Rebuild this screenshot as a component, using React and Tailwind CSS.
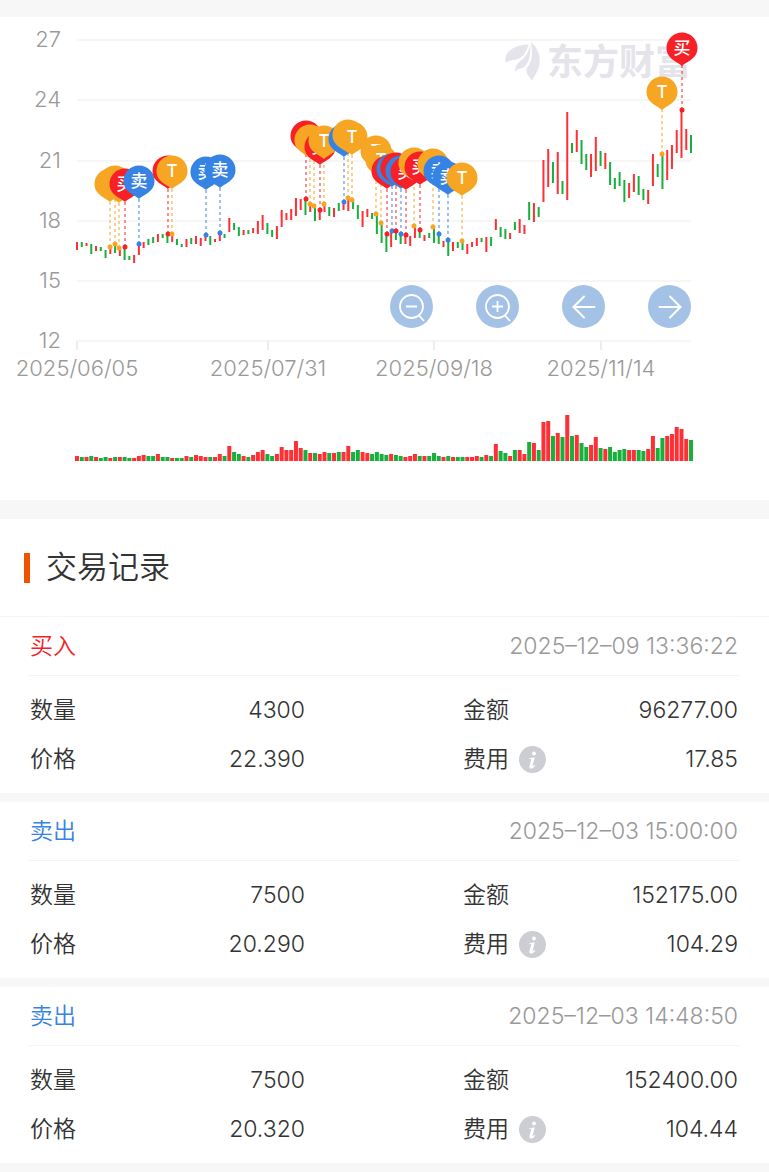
import { ArrowLeft, ArrowRight } from "lucide-react";

const RED = "#ff2f35";
const GREEN = "#16b13c";

const PIN = {
  buy: { color: "#f72027", label: "买" },
  sell: { color: "#3783e3", label: "卖" },
  t: { color: "#f6a623", label: "T" },
};

const GRID = [
  { value: 27, y: 40 },
  { value: 24, y: 100 },
  { value: 21, y: 161 },
  { value: 18, y: 221 },
  { value: 15, y: 281 },
  { value: 12, y: 341 },
];

const DATES = [
  { x: 77, label: "2025/06/05" },
  { x: 268, label: "2025/07/31" },
  { x: 434, label: "2025/09/18" },
  { x: 601, label: "2025/11/14" },
];

// [high y, low y, 1 = up / 0 = down, volume height]
const DAYS = [
  [242, 250, 1, 5], [242, 247, 0, 4], [243, 246, 1, 4], [244, 254, 0, 5], [246, 251, 1, 4],
  [247, 251, 0, 3], [250, 258, 0, 4], [248, 254, 1, 3], [245, 253, 0, 4], [249, 256, 1, 4],
  [247, 260, 0, 4], [256, 260, 0, 3], [255, 263, 1, 3], [245, 255, 1, 5], [242, 248, 1, 6],
  [239, 245, 0, 5], [237, 243, 0, 5], [234, 242, 1, 7], [234, 238, 0, 4], [234, 243, 0, 4],
  [234, 242, 1, 3], [239, 245, 0, 3], [244, 247, 0, 3], [239, 247, 1, 5], [238, 244, 0, 4],
  [236, 244, 1, 6], [238, 246, 1, 5], [236, 241, 1, 4], [236, 245, 0, 4], [239, 242, 1, 4],
  [233, 241, 1, 7], [234, 238, 0, 5], [218, 232, 1, 15], [223, 230, 0, 9], [227, 236, 0, 7],
  [230, 235, 1, 5], [230, 234, 0, 4], [228, 233, 1, 6], [221, 234, 1, 9], [215, 230, 1, 11],
  [223, 234, 0, 7], [230, 237, 0, 5], [226, 239, 1, 7], [210, 227, 1, 14], [213, 220, 1, 11],
  [209, 220, 1, 11], [198, 216, 1, 20], [199, 210, 1, 13], [199, 215, 0, 11], [203, 212, 1, 8],
  [207, 221, 0, 8], [209, 220, 1, 7], [204, 212, 1, 9], [207, 216, 0, 8], [208, 217, 1, 8],
  [203, 211, 0, 9], [202, 210, 1, 9], [200, 211, 1, 15], [200, 209, 0, 9], [205, 219, 0, 11],
  [211, 227, 1, 9], [209, 217, 1, 8], [213, 219, 0, 7], [215, 234, 0, 9], [223, 243, 0, 7],
  [234, 252, 0, 6], [233, 247, 1, 7], [231, 240, 0, 6], [234, 244, 0, 5], [235, 244, 1, 4],
  [236, 246, 1, 5], [226, 238, 1, 7], [230, 238, 0, 5], [235, 241, 1, 5], [233, 238, 0, 5],
  [227, 243, 0, 8], [234, 244, 0, 5], [241, 247, 1, 4], [240, 256, 0, 5], [242, 251, 1, 4],
  [242, 248, 0, 4], [241, 250, 0, 4], [244, 254, 1, 4], [242, 247, 1, 4], [238, 246, 1, 5],
  [238, 242, 0, 4], [237, 252, 1, 6], [237, 246, 0, 5], [219, 230, 1, 17], [227, 237, 0, 10],
  [229, 239, 0, 8], [233, 239, 1, 5], [222, 230, 0, 11], [219, 233, 1, 11], [225, 234, 1, 7],
  [202, 220, 0, 19], [203, 222, 1, 18], [207, 217, 0, 11], [160, 202, 1, 39], [149, 187, 1, 40],
  [162, 183, 0, 25], [152, 194, 1, 28], [181, 194, 0, 24], [112, 200, 1, 46], [143, 153, 0, 25],
  [130, 152, 1, 26], [140, 164, 0, 18], [154, 170, 0, 14], [154, 177, 1, 16], [137, 171, 1, 24],
  [151, 166, 0, 13], [153, 169, 1, 12], [162, 185, 0, 14], [178, 189, 0, 9], [172, 186, 0, 11],
  [180, 202, 0, 12], [183, 198, 1, 11], [174, 192, 1, 11], [176, 195, 0, 11], [189, 200, 0, 10],
  [190, 204, 1, 12], [154, 186, 1, 25], [164, 177, 0, 13], [154, 189, 0, 23], [150, 180, 1, 25],
  [145, 169, 1, 27], [130, 153, 1, 34], [111, 158, 1, 32], [129, 150, 1, 22], [135, 153, 0, 21],
];

// [type, x, pin centre y, dot y, fully behind a later pin]
const TRADES = [
  ["t", 110, 184, 247, true], ["t", 115, 181, 244, true], ["t", 119, 185, 248, true], ["buy", 125, 184, 247],
  ["sell", 139, 181, 244], ["buy", 168, 171, 234, true], ["t", 172, 171, 234], ["sell", 206, 172, 235],
  ["sell", 220, 170, 233], ["buy", 306, 136, 199, true], ["t", 310, 140, 204, true], ["t", 314, 143, 206, true],
  ["buy", 320, 147, 210], ["t", 324, 141, 204], ["sell", 344, 139, 202, true], ["t", 348, 135, 198, true],
  ["t", 352, 137, 200], ["t", 376, 151, 214], ["t", 381, 160, 223], ["buy", 387, 171, 234, true],
  ["sell", 392, 169, 231, true], ["buy", 396, 168, 231, true], ["sell", 401, 171, 234, true], ["buy", 406, 172, 235],
  ["t", 414, 163, 226, true], ["buy", 420, 167, 230], ["t", 433, 164, 227, true], ["sell", 439, 171, 234],
  ["sell", 448, 177, 240], ["t", 462, 178, 241], ["t", 662, 92, 154], ["buy", 682, 48, 110],
];

const RECORDS = [
  { side: "买入", time: "2025–12–09 13:36:22", count: "4300", price: "22.390", amount: "96277.00", fee: "17.85" },
  { side: "卖出", time: "2025–12–03 15:00:00", count: "7500", price: "20.290", amount: "152175.00", fee: "104.29" },
  { side: "卖出", time: "2025–12–03 14:48:50", count: "7500", price: "20.320", amount: "152400.00", fee: "104.44" },
];

const dayX = (i) => 77 + (i * 614) / 129;

const Watermark = () => (
  <g fill="#e4e4ea">
    <path d="M528.500 44.500C521 44.500 512 47 507.500 53C505 56.500 505 60 505.700 63C509 59.500 514 60.500 519 58.500C524 56 527 50 528.500 44.500Z" />
    <path d="M530 44.500C529 51 526 57 521 60.500C517 63 515 67 515 72C518 68 521 69 524.500 66.500C530 62 531 52 530 44.500Z" />
    <path d="M530.800 42C533 53 532 62 528 66.500C525.500 69.500 526 72 528 75C530 77.500 531 79 531.700 81C533 78 537 73 538.500 68C542 57 538 48 530.800 42Z" />
    <text x="547" y="75" fontSize="36" fontWeight="700">东方财富</text>
  </g>
);

const Pin = ({ type, x, y, dot, covered }) => {
  const { color, label } = PIN[type];
  return (
    <g>
      <path
        d={`M${x} ${y + 18}C${x - 4} ${y + 14} ${x - 15.5} ${y + 11} ${x - 15.5} ${y}A15.5 15.5 0 0 1 ${x + 15.5} ${y}C${x + 15.5} ${y + 11} ${x + 4} ${y + 14} ${x} ${y + 18}Z`}
        fill={color}
      />
      <circle cx={x} cy={dot} r="2.500" fill={color} />
      {!covered && (
        <text x={x} y={y + 6} fontSize="17" fontWeight="500" textAnchor="middle" fill="#fff">
          {label}
        </text>
      )}
    </g>
  );
};

const Chart = () => (
  <svg viewBox="0 17 769 483" className="block w-full" role="img" aria-label="K线">
    {GRID.map(({ value, y }) => (
      <g key={value}>
        <path d={`M77 ${y}H691`} stroke="#f6f6f7" strokeWidth="2" />
        <text x="61" y={y + 7} fontSize="22" textAnchor="end" fill="#999">{value}</text>
      </g>
    ))}
    {DATES.map(({ x, label }) => (
      <g key={label}>
        <path d={`M${x} 341V350`} stroke="#ededee" strokeWidth="2" />
        <text x={x} y="376" fontSize="22" textAnchor="middle" fill="#999">{label}</text>
      </g>
    ))}
    <Watermark />
    {DAYS.map(([high, low, up, volume], i) => (
      <g key={i} fill={up ? RED : GREEN}>
        <rect x={dayX(i) - 1} y={high} width="2" height={low - high} />
        <rect x={dayX(i) - 2} y={461 - volume} width="4" height={volume} />
      </g>
    ))}
    {TRADES.map(([type, x, y, dot]) => (
      <path key={x} d={`M${x} ${dot}V${y + 17}`} stroke={PIN[type].color} strokeWidth="1" strokeDasharray="3 3" />
    ))}
    {TRADES.map(([type, x, y, dot, covered]) => (
      <Pin key={x} type={type} x={x} y={y} dot={dot} covered={covered} />
    ))}
  </svg>
);

const ZoomIcon = ({ plus }) => (
  <svg viewBox="0 0 43 43" className="size-full" fill="none" stroke="#fff" strokeWidth="1.800">
    <circle cx="21.500" cy="21.500" r="11.500" />
    <path d="M16 21.500H27M28.500 30L34 36" />
    {plus && <path d="M21.500 16V27" />}
  </svg>
);

const RoundButton = ({ label, children }) => (
  <button type="button" aria-label={label} className="flex size-[43px] items-center justify-center rounded-full bg-[#a4c2e5] text-white">
    {children}
  </button>
);

const Field = ({ label, value, info }) => (
  <div className="flex h-[49px] items-center">
    <dt className="flex items-center gap-[10px] text-[23px]">
      {label}
      {info && (
        <button
          type="button"
          aria-label="费用说明"
          className="flex size-[27px] items-center justify-center rounded-full bg-[#cdced3] text-white"
        >
          <svg viewBox="0 0 27 27" className="size-full" fill="#fff">
            <circle cx="15" cy="7.500" r="1.900" />
            <path d="M10.500 12.300L15.800 11.300L13.700 19.500C13.500 20.500 14.200 20.300 15.700 18.800L16.300 19.400C14.500 21.800 12.900 22.700 11.600 22.500C10.300 22.300 10.200 21.200 10.500 20L12.200 13.500C12.300 13 11.500 13 10.300 13.200Z" />
          </svg>
        </button>
      )}
    </dt>
    <dd className="ml-auto text-[23px]">{value}</dd>
  </div>
);

const Record = ({ side, time, count, price, amount, fee }) => (
  <article className="bg-white pb-[9px]">
    <header className="mr-[30px] ml-[29px] flex h-[59px] items-center border-b border-[#f4f4f5] px-px">
      <h3 className={side === "买入" ? "text-[23px] text-[#f72027]" : "text-[23px] text-[#3783e3]"}>{side}</h3>
      <time className="ml-auto text-[23px] text-[#999]">{time}</time>
    </header>
    <dl className="grid grid-cols-2 gap-x-[158px] pt-[10px] pr-[31px] pl-[30px]">
      <Field label="数量" value={count} />
      <Field label="金额" value={amount} />
      <Field label="价格" value={price} />
      <Field label="费用" value={fee} info />
    </dl>
  </article>
);

export default function App() {
  return (
    <main className="min-h-screen bg-[#f7f7f8] pt-[17px] pb-[9px] font-['Inter','Noto_Sans_CJK_SC',sans-serif] font-[350] text-[#333]">
      <section className="relative bg-white">
        <Chart />
        <div className="absolute top-[268px] right-[78px] flex gap-[43px]">
          <RoundButton label="缩小"><ZoomIcon /></RoundButton>
          <RoundButton label="放大"><ZoomIcon plus /></RoundButton>
          <RoundButton label="左移"><ArrowLeft size={36} strokeWidth={1.3} /></RoundButton>
          <RoundButton label="右移"><ArrowRight size={36} strokeWidth={1.3} /></RoundButton>
        </div>
      </section>

      <section className="mt-[19px]">
        <div className="flex h-[98px] items-center gap-4 border-b border-[#f4f4f5] bg-white px-6">
          <span className="h-[30px] w-[6px] bg-[#ee5300]" />
          <h2 className="text-[31px]">交易记录</h2>
        </div>
        <div className="flex flex-col gap-[9px]">
          {RECORDS.map((record) => (
            <Record key={record.time} {...record} />
          ))}
        </div>
      </section>
    </main>
  );
}
